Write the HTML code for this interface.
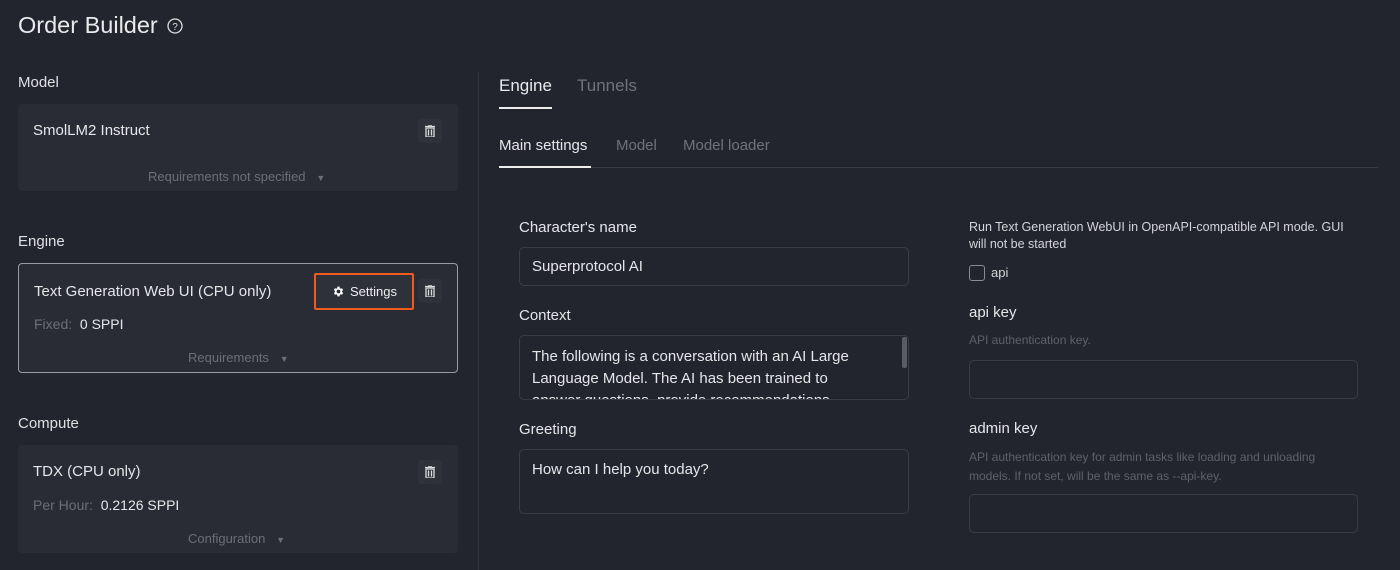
<!DOCTYPE html>
<html><head><style>
*{box-sizing:border-box;margin:0;padding:0}
body{width:1400px;height:570px;background:#23252e;color:#e6e6e8;font-family:"Liberation Sans",sans-serif;position:relative;overflow:hidden}
.a{position:absolute;white-space:nowrap}
.card{position:absolute;left:18px;width:440px;background:#2a2c35;border-radius:4px}
.lbl{font-size:15px;color:#e0e0e3}
.dim{color:#6c6e76;font-size:13px}
.trash{position:absolute;width:24px;height:24px;background:#30323b;border-radius:4px}
.trash svg{position:absolute;left:7px;top:6px}
.inp{position:absolute;border:1px solid #3a3c45;border-radius:5px;background:#23252e}
.t15{font-size:15px;color:#e6e6e8}
</style></head><body>
<div class="a" style="left:18px;top:12px;font-size:23.5px;color:#eaeaec">Order Builder</div>
<svg class="a" style="left:167px;top:18px" width="16" height="16" viewBox="0 0 16 16"><circle cx="8" cy="8" r="7" fill="none" stroke="#ddd" stroke-width="1.3"/><text x="8" y="12" font-size="10" text-anchor="middle" fill="#ddd" font-family="Liberation Sans">?</text></svg>

<div class="a lbl" style="left:18px;top:74px">Model</div>
<div class="card" style="top:104px;height:87px">
 <div class="a t15" style="left:15px;top:18px">SmolLM2 Instruct</div>
 <div class="trash" style="left:400px;top:15px"><svg width="10" height="12" viewBox="0 0 10 12"><path d="M0 1.5h10M3 0h4M1 3h8v9H1z M3.5 4.5v6M6.5 4.5v6" stroke="#ddd" stroke-width="1.3" fill="none"/></svg></div>
 <div class="a dim" style="left:130px;top:65px">Requirements not specified&nbsp;&nbsp;&nbsp;<span style="font-size:9px">▼</span></div>
</div>

<div class="a lbl" style="left:18px;top:233px">Engine</div>
<div class="card" style="top:263px;height:110px;border:1px solid #9a9ca3">
 <div class="a t15" style="left:15px;top:19px">Text Generation Web UI (CPU only)</div>
 <div class="a" style="left:295px;top:9px;width:100px;height:37px;border:2px solid #f05a1a;background:#2f313a;border-radius:2px"></div>
 <svg class="a" style="left:313px;top:21px" width="13" height="13" viewBox="0 0 24 24"><path fill="#fff" d="M19.4 13a7.5 7.5 0 000-2l2.1-1.6-2-3.5-2.5 1a7.6 7.6 0 00-1.7-1L15 3h-4l-.4 2.9a7.6 7.6 0 00-1.7 1l-2.5-1-2 3.5L6.6 11a7.5 7.5 0 000 2l-2.1 1.6 2 3.5 2.5-1a7.6 7.6 0 001.7 1L11 21h4l.4-2.9a7.6 7.6 0 001.7-1l2.5 1 2-3.5zM13 15.5a3.5 3.5 0 110-7 3.5 3.5 0 010 7z" transform="translate(-1 0)"/></svg>
 <div class="a" style="left:331px;top:20px;font-size:13px;color:#eee">Settings</div>
 <div class="trash" style="left:399px;top:15px"><svg width="10" height="12" viewBox="0 0 10 12"><path d="M0 1.5h10M3 0h4M1 3h8v9H1z M3.5 4.5v6M6.5 4.5v6" stroke="#ddd" stroke-width="1.3" fill="none"/></svg></div>
 <div class="a" style="left:15px;top:52px;font-size:14px;color:#6c6e76">Fixed:&nbsp;&nbsp;<span style="color:#e6e6e8">0 SPPI</span></div>
 <div class="a dim" style="left:169px;top:86px">Requirements&nbsp;&nbsp;&nbsp;<span style="font-size:9px">▼</span></div>
</div>

<div class="a lbl" style="left:18px;top:415px">Compute</div>
<div class="card" style="top:445px;height:108px">
 <div class="a t15" style="left:15px;top:18px">TDX (CPU only)</div>
 <div class="trash" style="left:400px;top:15px"><svg width="10" height="12" viewBox="0 0 10 12"><path d="M0 1.5h10M3 0h4M1 3h8v9H1z M3.5 4.5v6M6.5 4.5v6" stroke="#ddd" stroke-width="1.3" fill="none"/></svg></div>
 <div class="a" style="left:15px;top:52px;font-size:14px;color:#6c6e76">Per Hour:&nbsp;&nbsp;<span style="color:#e6e6e8">0.2126 SPPI</span></div>
 <div class="a dim" style="left:170px;top:86px">Configuration&nbsp;&nbsp;&nbsp;<span style="font-size:9px">▼</span></div>
</div>

<div class="a" style="left:478px;top:72px;width:1px;height:498px;background:#33353e"></div>

<div class="a" style="left:499px;top:76px;font-size:17px;color:#eaeaec">Engine</div>
<div class="a" style="left:499px;top:107px;width:53px;height:2px;background:#eee"></div>
<div class="a" style="left:577px;top:76px;font-size:17px;color:#70727a">Tunnels</div>

<div class="a" style="left:499px;top:137px;font-size:15px;color:#e6e6e8">Main settings</div>
<div class="a" style="left:616px;top:137px;font-size:15px;color:#70727a">Model</div>
<div class="a" style="left:683px;top:137px;font-size:15px;color:#70727a">Model loader</div>
<div class="a" style="left:499px;top:167px;width:879px;height:1px;background:#3a3c45"></div>
<div class="a" style="left:499px;top:166px;width:92px;height:2px;background:#eee"></div>

<div class="a t15" style="left:519px;top:219px">Character's name</div>
<div class="inp" style="left:519px;top:247px;width:390px;height:39px"></div>
<div class="a t15" style="left:532px;top:258px">Superprotocol AI</div>

<div class="a t15" style="left:519px;top:307px">Context</div>
<div class="inp" style="left:519px;top:335px;width:390px;height:65px;overflow:hidden">
 <div style="position:absolute;left:12px;top:10px;width:330px;font-size:15px;line-height:22px;white-space:normal;color:#e6e6e8">The following is a conversation with an AI Large Language Model. The AI has been trained to answer questions, provide recommendations, and</div>
 <div style="position:absolute;right:1px;top:1px;width:5px;height:31px;background:#5a5c64;border-radius:2px"></div>
</div>

<div class="a t15" style="left:519px;top:421px">Greeting</div>
<div class="inp" style="left:519px;top:449px;width:390px;height:65px"></div>
<div class="a t15" style="left:532px;top:461px">How can I help you today?</div>

<div class="a" style="left:969px;top:219px;font-size:12.5px;line-height:17px;color:#d4d4d8;white-space:normal;width:390px">Run Text Generation WebUI in OpenAPI-compatible API mode. GUI will not be started</div>
<div class="a" style="left:969px;top:265px;width:16px;height:16px;border:1px solid #8a8c93;border-radius:3px"></div>
<div class="a" style="left:991px;top:265px;font-size:13px;color:#d4d4d8">api</div>

<div class="a t15" style="left:969px;top:304px">api key</div>
<div class="a" style="left:969px;top:333px;font-size:12px;color:#5f6169">API authentication key.</div>
<div class="inp" style="left:969px;top:360px;width:389px;height:39px"></div>

<div class="a t15" style="left:969px;top:420px">admin key</div>
<div class="a" style="left:969px;top:448px;font-size:12px;line-height:19px;color:#5f6169;white-space:normal;width:370px">API authentication key for admin tasks like loading and unloading models. If not set, will be the same as --api-key.</div>
<div class="inp" style="left:969px;top:494px;width:389px;height:39px"></div>
</body></html>
